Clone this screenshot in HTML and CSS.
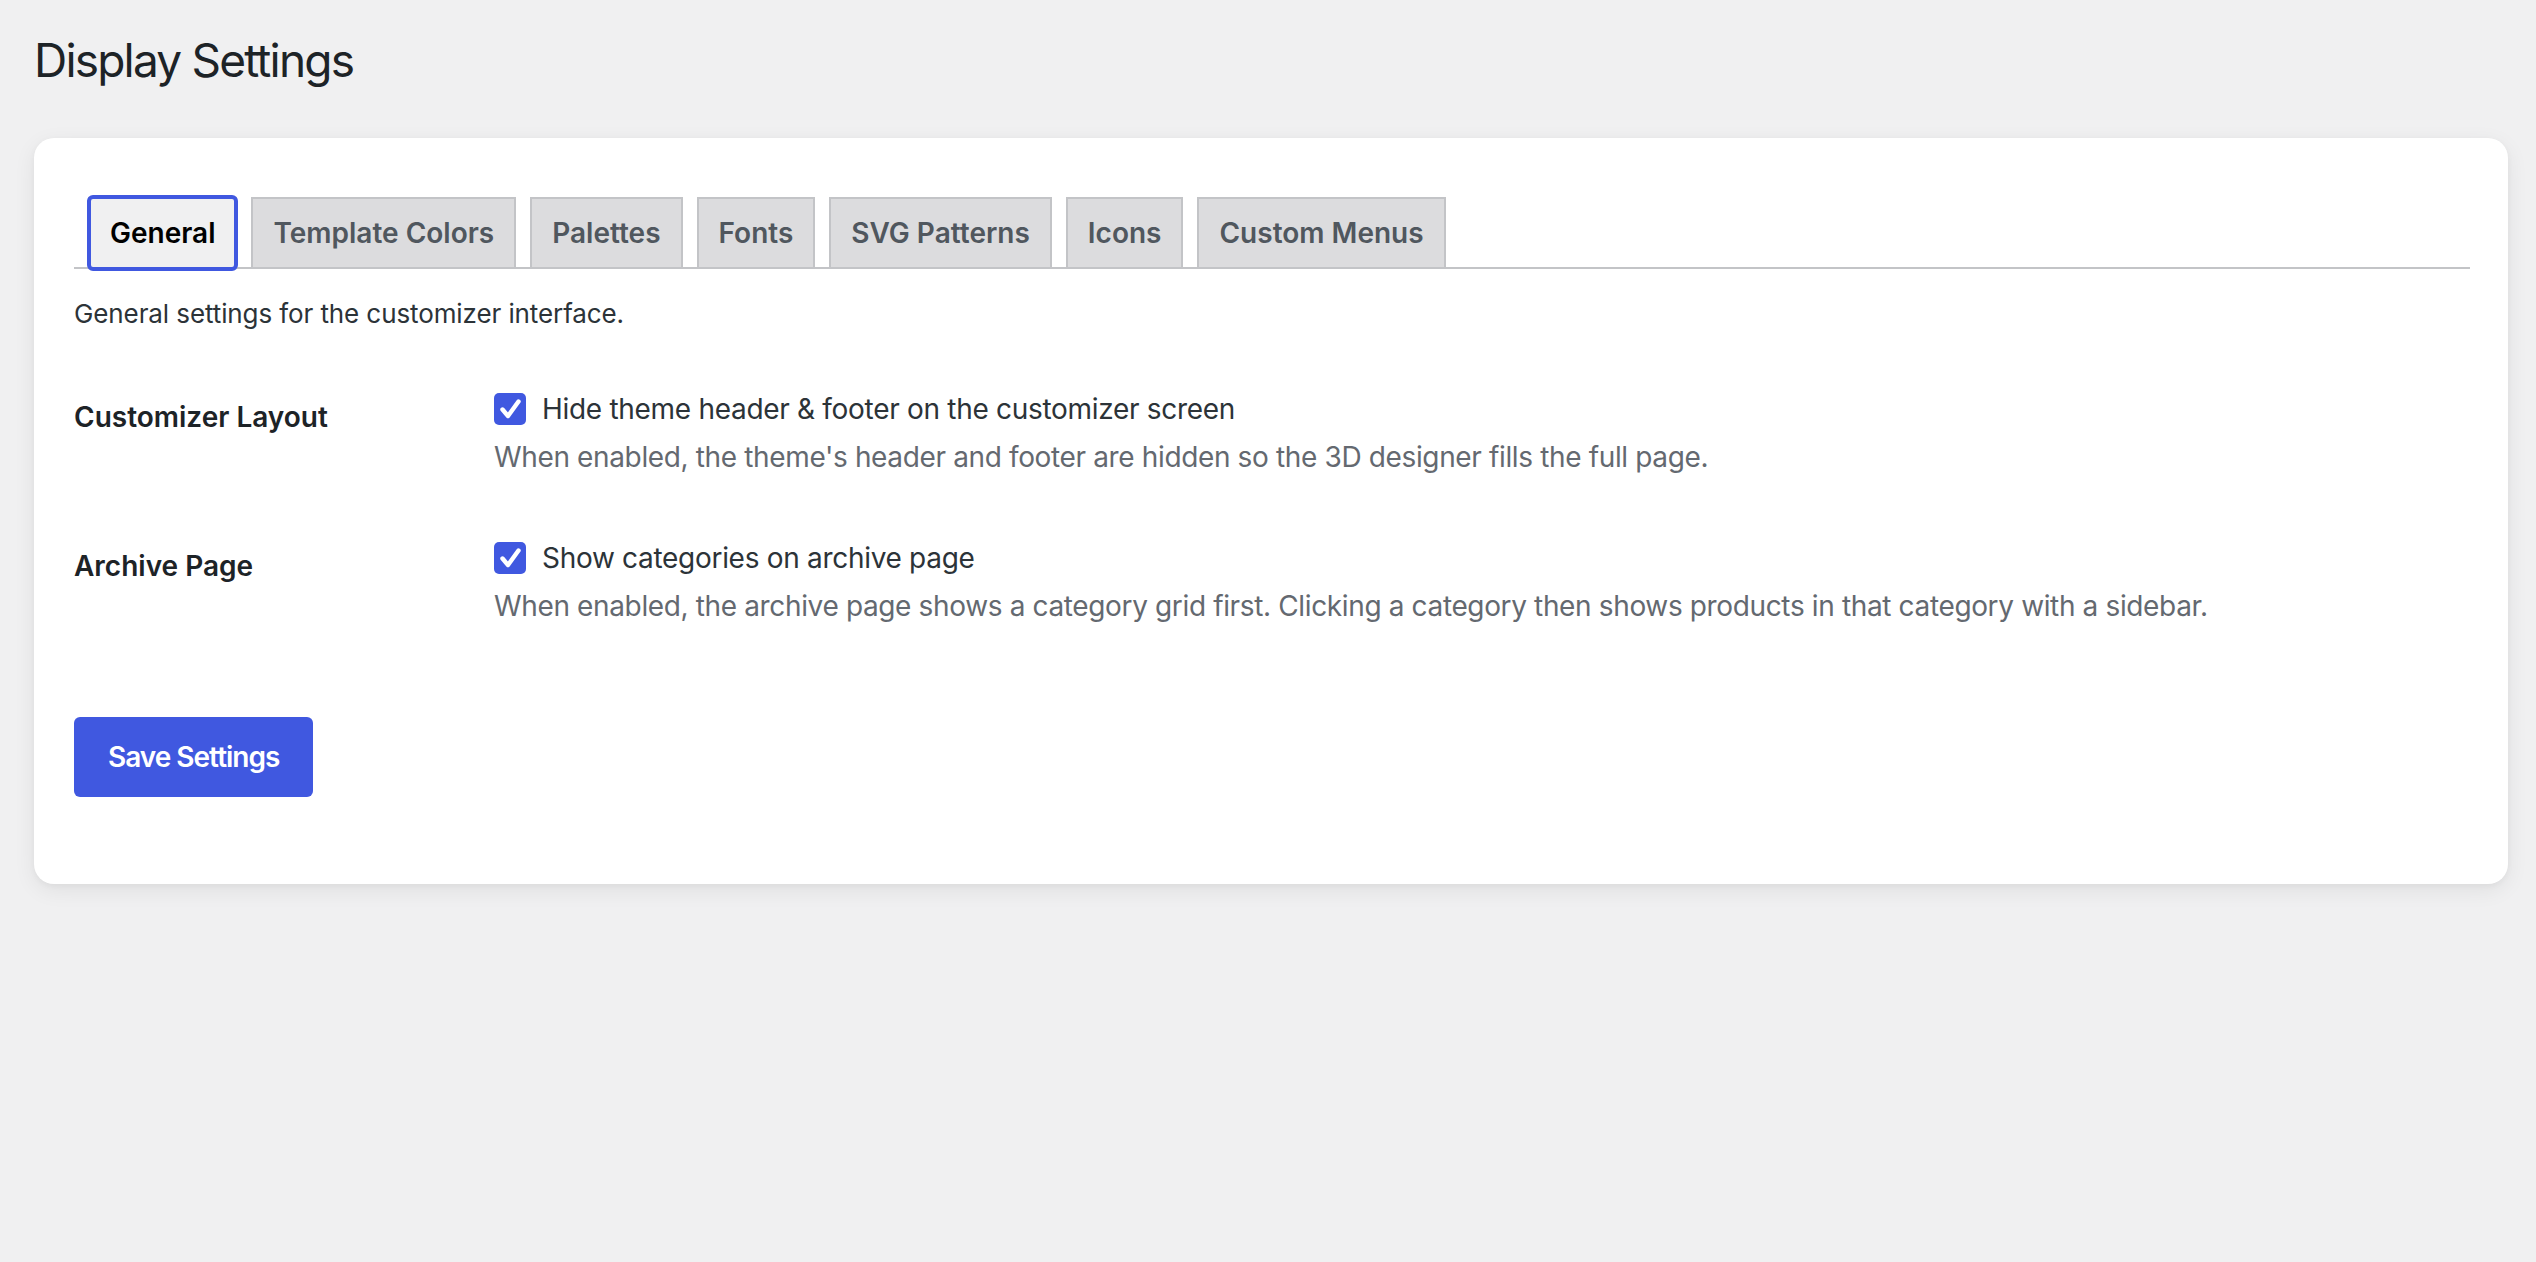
FILE: index.html
```html
<!DOCTYPE html>
<html lang="en">
<head>
<meta charset="utf-8">
<title>Display Settings</title>
<link rel="stylesheet" href="styles.css">
</head>
<body>
<div class="wrap">
  <h1 class="page-title">Display Settings</h1>
  <div class="card">
    <nav class="tabs">
      <a class="tab tab-active" href="#">General</a>
      <a class="tab" href="#">Template Colors</a>
      <a class="tab" href="#">Palettes</a>
      <a class="tab" href="#">Fonts</a>
      <a class="tab" href="#">SVG Patterns</a>
      <a class="tab" href="#">Icons</a>
      <a class="tab" href="#">Custom Menus</a>
    </nav>
    <p class="intro">General settings for the customizer interface.</p>
    <div class="rows">
      <div class="row">
        <div class="row-label">Customizer Layout</div>
        <div class="row-field">
          <label class="check">
            <span class="box"><svg viewBox="0 0 32 32" width="32" height="32"><polyline points="8.5,16.5 14,23 24.5,8.5" fill="none" stroke="#fff" stroke-width="4.4" stroke-linecap="round" stroke-linejoin="round"/></svg></span>
            <span class="check-text">Hide theme header &amp; footer on the customizer screen</span>
          </label>
          <p class="desc">When enabled, the theme's header and footer are hidden so the 3D designer fills the full page.</p>
        </div>
      </div>
      <div class="row">
        <div class="row-label">Archive Page</div>
        <div class="row-field">
          <label class="check">
            <span class="box"><svg viewBox="0 0 32 32" width="32" height="32"><polyline points="8.5,16.5 14,23 24.5,8.5" fill="none" stroke="#fff" stroke-width="4.4" stroke-linecap="round" stroke-linejoin="round"/></svg></span>
            <span class="check-text">Show categories on archive page</span>
          </label>
          <p class="desc">When enabled, the archive page shows a category grid first. Clicking a category then shows products in that category with a sidebar.</p>
        </div>
      </div>
    </div>
    <div class="submit">
      <button class="btn-primary" type="button">Save Settings</button>
    </div>
  </div>
</div>
</body>
</html>
```
FILE: styles.css
```css
* { box-sizing: border-box; }

html {
  min-height: 100%;
  background: #f0f0f1;
}

body {
  margin: 0;
  padding: 0;
  min-height: 1262px;
  background: #f0f0f1;
  font-family: Inter, "Noto Sans", "Liberation Sans", sans-serif;
  color: #3c434a;
}

.wrap {
  padding: 30px 28px 0 34px;
}

.page-title {
  margin: 0;
  font-size: 46px;
  line-height: 60px;
  font-weight: 400;
  color: #1d2327;
  letter-spacing: -1.8px;
}

.card {
  margin-top: 48px;
  background: #fff;
  border-radius: 20px;
  padding: 40px 38px 87px 40px;
  box-shadow: 0 6px 22px rgba(0, 0, 0, 0.07), 0 2px 6px rgba(0, 0, 0, 0.04);
}

.tabs {
  display: flex;
  padding-top: 19px;
  border-bottom: 2px solid #c3c4c7;
}

.tab {
  position: relative;
  display: block;
  margin-left: 14px;
  padding: 10px 20px;
  border: 2px solid #c3c4c7;
  border-bottom: none;
  background: #dcdcde;
  color: #50575e;
  font-size: 28px;
  line-height: 48px;
  font-weight: 600;
  text-decoration: none;
  letter-spacing: 0;
}

.tab-active {
  background: #f0f0f1;
  color: #000;
}

.tab-active::after {
  content: "";
  position: absolute;
  left: -3px;
  right: -3px;
  top: -4px;
  bottom: -4px;
  border: 4px solid #4058e0;
  border-radius: 6px;
}

.intro {
  margin: 25px 0 58px;
  font-size: 26px;
  line-height: 39px;
  color: #2c3338;
  letter-spacing: -0.1px;
}

.rows {
  display: flex;
  flex-direction: column;
  gap: 65px;
}

.row {
  display: grid;
  grid-template-columns: 420px 1fr;
}

.row-label {
  padding-top: 8px;
  font-size: 28px;
  line-height: 36px;
  font-weight: 600;
  color: #1d2327;
}

.check {
  display: flex;
  align-items: center;
  gap: 16px;
  height: 36px;
}

.box {
  display: block;
  width: 32px;
  height: 32px;
  border-radius: 5px;
  background: #4058e0;
}

.box svg { display: block; }

.check-text {
  font-size: 28px;
  line-height: 36px;
  color: #2c3338;
  letter-spacing: -0.3px;
}

.desc {
  margin: 12px 0 0;
  font-size: 28px;
  line-height: 36px;
  color: #646970;
  letter-spacing: -0.36px;
}

.submit {
  margin-top: 93px;
}

.btn-primary {
  display: block;
  height: 80px;
  padding: 0 34px;
  border: none;
  border-radius: 6px;
  background: #4058e0;
  color: #fff;
  font-family: Inter, "Noto Sans", "Liberation Sans", sans-serif;
  font-size: 28px;
  font-weight: 600;
  letter-spacing: -1px;
}
```
